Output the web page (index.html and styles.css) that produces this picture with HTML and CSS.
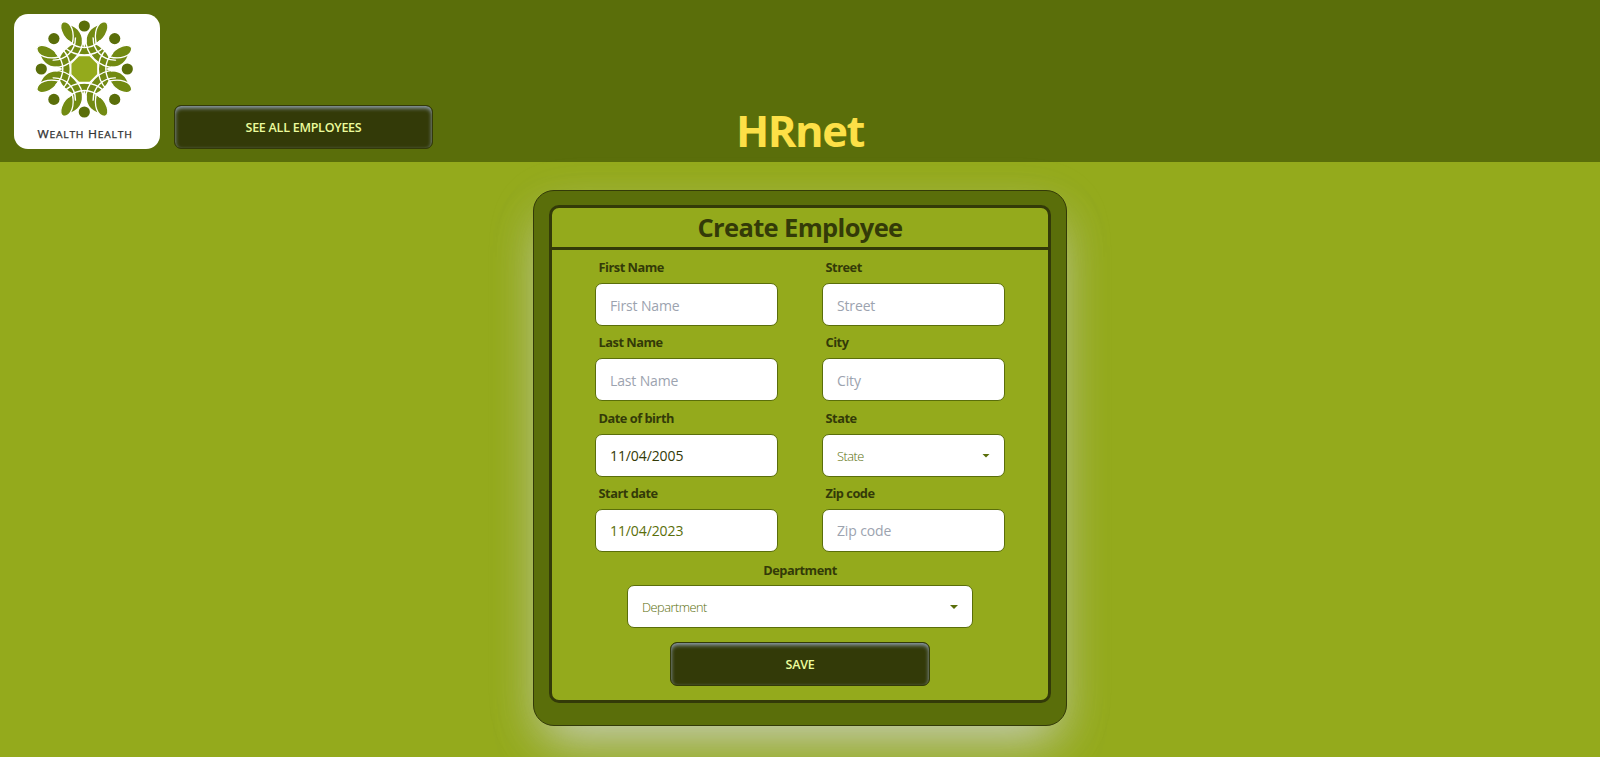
FILE: index.html
```html
<!DOCTYPE html>
<html lang="en">
<head>
<meta charset="utf-8">
<title>HRnet</title>
<link rel="stylesheet" href="styles.css">
</head>
<body>
<header class="header">
  <div class="nav">
    <svg class="logo" width="146" height="135" viewBox="0 0 146 135" role="img">
      <defs>
        <clipPath id="core"><circle r="33"/></clipPath>
        <g id="sector">
          <path fill="#728a12" d="M-16-44C-6-42-.500-33-3-24L-12-22C-10-30-11-37-16-44Z"/>
          <path fill="#728a12" stroke="#fff" stroke-width="1.300" d="M-20.500-47.500C-12.500-47-9.500-36-12-25.500C-23-31-27-46-20.500-47.500Z"/>
        </g>
        <g id="wing"><use href="#sector"/><use href="#sector" transform="scale(-1 1)"/></g>
      </defs>
      <g transform="translate(70.300 55)">
        <circle r="27" fill="#728a12"/>
        <g fill="#fff">
          <path id="gap" d="M0-21L-4-32H4Z"/>
          <use href="#gap" transform="rotate(90)"/><use href="#gap" transform="rotate(180)"/><use href="#gap" transform="rotate(270)"/>
          <circle cx="30.400" cy="30.400" r="16"/><circle cx="-30.400" cy="30.400" r="16"/><circle cx="30.400" cy="-30.400" r="16"/><circle cx="-30.400" cy="-30.400" r="16"/>
        </g>
        <use href="#wing"/><use href="#wing" transform="rotate(90)"/><use href="#wing" transform="rotate(180)"/><use href="#wing" transform="rotate(270)"/>
        <g clip-path="url(#core)" fill="none" stroke="#fff" stroke-width="1.400">
          <circle cy="-43" r="21.500"/><circle cy="43" r="21.500"/><circle cx="-43" r="21.500"/><circle cx="43" r="21.500"/>
          <circle cy="-43" r="29"/><circle cy="43" r="29"/><circle cx="-43" r="29"/><circle cx="43" r="29"/>
          <circle cx="30.400" cy="30.400" r="21.500"/><circle cx="-30.400" cy="30.400" r="21.500"/><circle cx="30.400" cy="-30.400" r="21.500"/><circle cx="-30.400" cy="-30.400" r="21.500"/>
          <circle cx="30.400" cy="30.400" r="29"/><circle cx="-30.400" cy="30.400" r="29"/><circle cx="30.400" cy="-30.400" r="29"/><circle cx="-30.400" cy="-30.400" r="29"/>
        </g>
        <path fill="#94aa1c" stroke="#fff" stroke-width="1.300" d="M-5.500-13.500H5.500L13.500-5.500V5.500L5.500 13.500H-5.500L-13.500 5.500V-5.500Z"/>
        <g fill="#5a6e0a">
          <circle cy="-43" r="5.600"/><circle cy="43" r="5.600"/><circle cx="-43" r="5.600"/><circle cx="43" r="5.600"/>
          <circle cx="30.400" cy="30.400" r="5.600"/><circle cx="-30.400" cy="30.400" r="5.600"/><circle cx="30.400" cy="-30.400" r="5.600"/><circle cx="-30.400" cy="-30.400" r="5.600"/>
        </g>
      </g>
      <text class="brand" x="23.500" y="123.500" textLength="95" lengthAdjust="spacingAndGlyphs">W<tspan class="sc">EALTH</tspan> H<tspan class="sc">EALTH</tspan></text>
    </svg>
    <a class="btn">SEE ALL EMPLOYEES</a>
  </div>
  <h1 class="title">HRnet</h1>
</header>
<main class="main">
  <section class="card">
    <form class="form">
      <h2 class="form-title">Create Employee</h2>
      <div class="fields">
        <label class="field"><span class="label">First Name</span><input class="input" placeholder="First Name"></label>
        <label class="field"><span class="label">Street</span><input class="input" placeholder="Street"></label>
        <label class="field"><span class="label">Last Name</span><input class="input" placeholder="Last Name"></label>
        <label class="field"><span class="label">City</span><input class="input" placeholder="City"></label>
        <label class="field"><span class="label">Date of birth</span><input class="input date dark" value="11/04/2005"></label>
        <div class="field"><span class="label">State</span><div class="input select"><span>State</span><i class="caret"></i></div></div>
        <label class="field"><span class="label">Start date</span><input class="input date" value="11/04/2023"></label>
        <label class="field"><span class="label">Zip code</span><input class="input" placeholder="Zip code"></label>
      </div>
      <div class="field dept"><span class="label">Department</span><div class="input select"><span>Department</span><i class="caret"></i></div></div>
      <button class="btn save" type="button">SAVE</button>
    </form>
  </section>
</main>
</body>
</html>
```
FILE: styles.css
```css
* { box-sizing: border-box; }
body {
  margin: 0;
  height: 757px;
  overflow: hidden;
  background: #94aa1c;
  color: #333a08;
  font-family: "Open Sans", "Noto Sans", sans-serif;
}
.header {
  display: grid;
  grid-template-columns: 1fr auto 1fr;
  align-items: end;
  height: 162px;
  padding: 0 14px 13px;
  background: #5a6e0a;
}
.nav { display: flex; align-items: flex-end; gap: 14px; }
.logo { display: block; background: #fff; border-radius: 14px; }
.brand { font: 10px "Open Sans", sans-serif; letter-spacing: .6px; fill: #333; stroke: #333; stroke-width: .25px; }
.sc { font-size: 8.500px; }
.title {
  margin: 0;
  color: #fde047;
  font-size: 43.500px;
  line-height: 36px;
  letter-spacing: -1.400px;
}
.btn {
  display: flex;
  align-items: center;
  justify-content: center;
  width: 259px;
  height: 44px;
  border: 1px solid #333a08;
  border-radius: 7px;
  background: #333a08;
  box-shadow: inset 0 2px 4px #94a3b8;
  color: #ecfc9c;
  font: 600 12.500px "Open Sans", sans-serif;
  letter-spacing: -.250px;
}
.main { display: flex; justify-content: center; padding-top: 28px; }
.card {
  width: 534px;
  height: 536px;
  padding: 14px 15px;
  border: 1px solid #333a08;
  border-radius: 21px;
  background: #5a6e0a;
  box-shadow: 0 25px 50px -12px rgba(209, 213, 219, .78), 0 12px 50px rgba(209, 213, 219, .14);
}
.form {
  display: flex;
  flex-direction: column;
  align-items: center;
  height: 498px;
  border: 3px solid #333a08;
  border-radius: 10px;
  background: #94aa1c;
}
.form-title {
  width: 100%;
  height: 42px;
  margin: 0;
  border-bottom: 3px solid #333a08;
  text-align: center;
  font-size: 25.500px;
  line-height: 39px;
  letter-spacing: -.650px;
}
.fields {
  display: grid;
  grid-template-columns: 183px 183px;
  column-gap: 44px;
  grid-auto-rows: 75.300px;
  padding-top: 6px;
}
.field { display: block; }
.label {
  display: block;
  height: 27px;
  padding-left: 3.500px;
  font-size: 12.800px;
  font-weight: 700;
  line-height: 22px;
  letter-spacing: -.480px;
}
.input {
  display: block;
  width: 100%;
  height: 43px;
  padding: 1px 14px 0;
  border: 1px solid #5a6e0a;
  border-radius: 7px;
  background: #fff;
  color: #5a6e0a;
  font: 14px "Open Sans", sans-serif;
}
.input::placeholder { color: #9ca3af; opacity: 1; letter-spacing: -.150px; }
.date { letter-spacing: -.1px; }
.dark { color: #333a08; }
.select {
  display: flex;
  align-items: center;
  justify-content: space-between;
  font-size: 12.800px;
  font-weight: 300;
  letter-spacing: -.5px;
}
.caret {
  width: 8px;
  height: 4px;
  background: #5a6e0a;
  clip-path: polygon(0 0, 100% 0, 50% 100%);
}
.dept { width: 346px; margin-top: 1.800px; }
.dept .label { padding: 0; text-align: center; height: 26px; }
.save { width: 260px; margin-top: 14px; padding-top: 2px; }
```
